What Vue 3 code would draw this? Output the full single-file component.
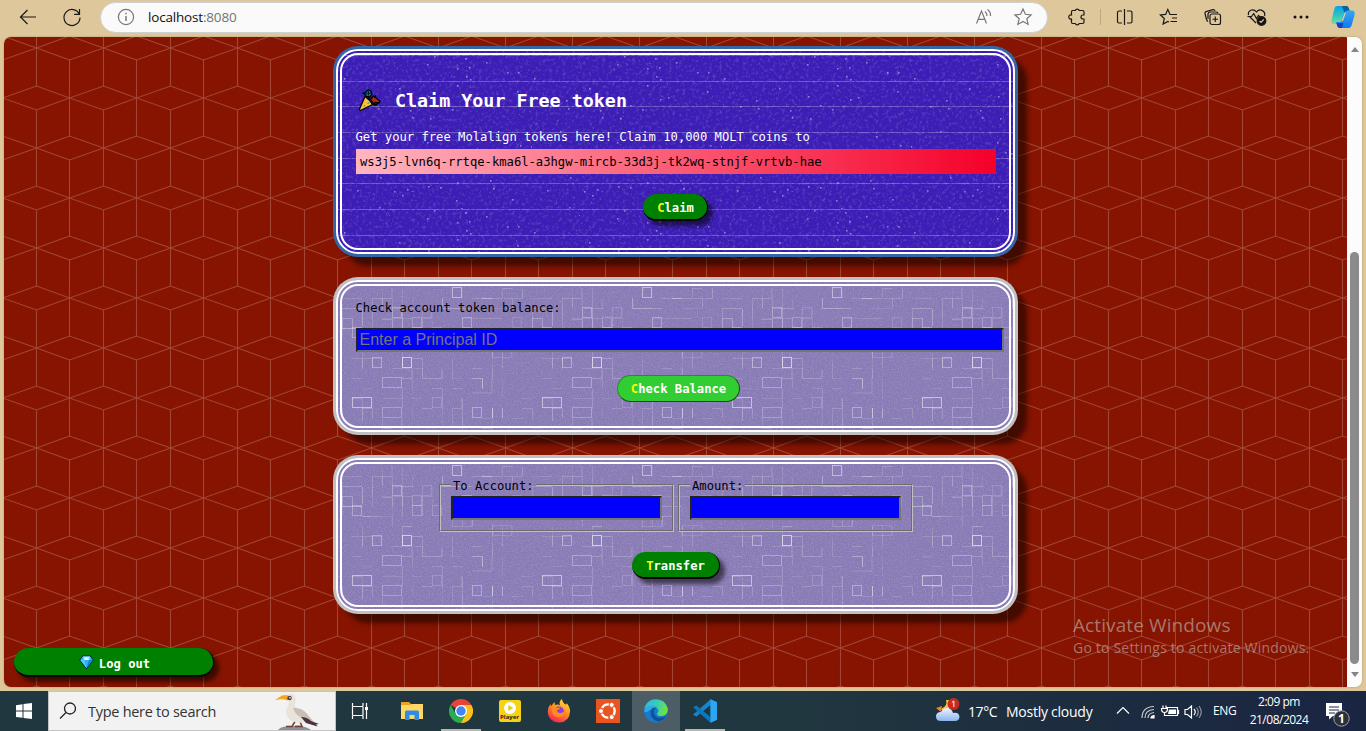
<script setup>
const rand = (seed) => () => {
  seed = (seed * 1664525 + 1013904223) % 4294967296
  return seed / 4294967296
}

const r1 = rand(77)
const specks = Array.from({ length: 560 }, () => {
  const big = r1() > 0.91
  return { x: Math.floor(r1() * 190), y: Math.floor(r1() * 154), s: big ? 1.6 : 1, o: big ? 0.42 : 0.05 + r1() * 0.1 }
})

// Maze cells: column, row, width, height, opacity
const cells = [
  [11, 0, 1, 1, 0.45], [5, 2, 1, 1, 0.3], [12, 3, 1, 1, 0.3], [7, 3, 1, 1, 0.22], [1, 4, 1, 1, 0.3],
  [7, 4, 1, 1, 0.22], [9, 4, 1, 1, 0.18], [3, 7, 1, 1, 0.34], [6, 7, 1, 1, 0.6], [4, 9, 2, 1, 0.3],
  [1, 11, 2, 1, 0.5], [9, 11, 1, 1, 0.17], [4, 12, 2, 1, 0.26], [13, 12, 1, 1, 0.35], [8, 2, 1, 1, 0.15],
  [15, 6, 2, 1, 0.12], [17, 3, 1, 1, 0.12],
]
const strokes = [
  ['M100.5 12V22.500H120', 0.32], ['M72 22.500H52', 0.2], ['M0 32.500H10.500V42', 0.26], ['M20.500 23V40', 0.28],
  ['M0 42.500H20', 0.3], ['M40 33.500H50.500V43', 0.18], ['M70 83V92.500H60', 0.22], ['M80.500 82V92.500H100V84', 0.22],
  ['M130 92.500H140.500V103', 0.32], ['M150.500 122V132', 0.55], ['M160.500 122V132', 0.25],
  ['M30 12.500H50V2', 0.18], ['M120 52.500H140', 0.2], ['M10 72.500H40', 0.14], ['M130 12.500H150', 0.15],
  ['M162 12.500H180', 0.16], ['M60 132.500V146', 0.2], ['M120.500 132V147', 0.22], ['M110 62.500H130V52', 0.15],
  ['M150 92V107H130', 0.15], ['M110 122.500H120V112', 0.17], ['M20.500 122V135', 0.25],
]
const r2 = rand(19)
for (let i = 0; i < 115; i++) {
  const x = Math.floor(r2() * 19) * 10
  const y = Math.floor(r2() * 16) * 10 + 2.5
  const n = r2() > 0.7 ? 20 : 10
  strokes.push([r2() > 0.5 ? `M${x} ${y}h${n}` : `M${x + 0.5} ${y}v${n}`, 0.07 + r2() * 0.14])
}
</script>

<template>
  <div class="desktop">
    <svg class="defs" width="0" height="0">
      <defs>
        <filter id="grain" x="0" y="0" width="100%" height="100%">
          <feTurbulence type="fractalNoise" baseFrequency="0.75" numOctaves="2" seed="4" />
          <feColorMatrix values="0 0 0 0 1  0 0 0 0 1  0 0 0 0 1  1.2 0 0 0 -0.5" />
        </filter>
        <filter id="dust" x="0" y="0" width="100%" height="100%">
          <feTurbulence type="fractalNoise" baseFrequency="0.3" numOctaves="4" seed="9" />
          <feColorMatrix values="0 0 0 0 1  0 0 0 0 1  0 0 0 0 1  1.6 0 0 0 -0.8" />
        </filter>
        <pattern id="stars" width="190" height="154" patternUnits="userSpaceOnUse" x="6" y="6">
          <rect v-for="(p, i) in specks" :key="i" :x="p.x" :y="p.y" :width="p.s" :height="p.s" fill="#fff" :opacity="p.o" />
          <g fill="none" stroke="#fff">
            <path v-for="n in 6" :key="n" :d="`M0 ${Math.round((n - 1) * 25.67) + 0.5}H190`" stroke-opacity=".16" />
            <path v-for="n in 6" :key="'d' + n" :d="`M0 ${Math.round((n - 1) * 25.67) + 0.5}H190`" stroke-opacity=".13" stroke-dasharray="7 3 2 4 12 2" />
          </g>
        </pattern>
        <pattern id="maze" width="190" height="190" patternUnits="userSpaceOnUse" x="6" y="6">
          <g fill="none" stroke="#fff">
            <rect v-for="(c, i) in cells" :key="i" :x="c[0] * 10 + 0.5" :y="c[1] * 10 + 1.5" :width="c[2] * 10 - 1" :height="c[3] * 10" :stroke-opacity="c[4]" />
            <path v-for="(s, i) in strokes" :key="'s' + i" :d="s[0]" :stroke-opacity="s[1]" />
          </g>
        </pattern>
        <linearGradient id="edgeA" x1="0" y1="0" x2="1" y2="1"><stop stop-color="#0c59a4" /><stop offset="1" stop-color="#114a8b" /></linearGradient>
        <linearGradient id="edgeB" x1="0" y1="0" x2="1" y2=".3"><stop stop-color="#2fb5e8" /><stop offset=".6" stop-color="#39cfae" /><stop offset="1" stop-color="#67e34a" /></linearGradient>
        <linearGradient id="fox" x1=".8" y1="0" x2=".3" y2="1"><stop stop-color="#ffe43b" /><stop offset=".45" stop-color="#ff9320" /><stop offset="1" stop-color="#f5205c" /></linearGradient>
        <linearGradient id="cop1" x1="0" y1="0" x2="0" y2="1"><stop stop-color="#0b9fe8" /><stop offset=".5" stop-color="#2cc4c4" /><stop offset="1" stop-color="#7ddc8a" /></linearGradient>
        <linearGradient id="cop2" x1="0" y1="0" x2="0" y2="1"><stop stop-color="#37a7f4" /><stop offset="1" stop-color="#1477f0" /></linearGradient>
        <linearGradient id="cloud" x1="0" y1="0" x2="0" y2="1"><stop stop-color="#eef4ff" /><stop offset="1" stop-color="#8bb4ee" /></linearGradient>
      </defs>
    </svg>

    <header class="toolbar">
      <svg class="ic back" width="24" height="24" viewBox="0 0 24 24"><path d="M20 12H4.500M11.500 5 4.500 12l7 7" /></svg>
      <svg class="ic reload" width="24" height="24" viewBox="0 0 24 24"><path d="M19.200 9A8 8 0 1 0 20 12.500M19.500 4v5.300h-5.300" /></svg>
      <div class="address">
        <svg class="ic grey" width="20" height="20" viewBox="0 0 20 20"><circle cx="10" cy="10" r="7.600" /><path d="M10 9v5M10 5.800v1.500" stroke-width="1.500" /></svg>
        <span class="url">localhost<i>:8080</i></span>
        <svg class="ic grey read" width="20" height="20" viewBox="0 0 20 20"><path d="M2.500 16.500 7.500 4l5 12.500M4.200 12.300h6.600M11 4.500q2 1.500 2 4.500M13.500 2.500q3.300 2.300 3 6.500" /></svg>
        <svg class="ic grey" width="20" height="20" viewBox="0 0 20 20"><path d="m10 2 2.400 5.300 5.700.6-4.300 3.800 1.300 5.700L10 14.500l-5.100 2.900 1.300-5.700L1.900 7.900l5.700-.6Z" /></svg>
      </div>
      <svg class="ic puzzle" width="20" height="20" viewBox="0 0 20 20"><path d="M5.500 3.500h2.700a2.200 2.200 0 0 1 4.100 0H15.500Q17 3.500 17 5v3h-1a2 2 0 0 0 0 4h1v3q0 1.500-1.500 1.500h-3.200a2.200 2.200 0 0 1-4.100 0H5.500Q4.500 16.500 4.500 15v-3a2.100 2.100 0 1 1 0-4V5Q4.500 3.500 5.500 3.500Z" /></svg>
      <span class="sep"></span>
      <svg class="ic split" width="20" height="20" viewBox="0 0 20 20"><path d="M9.500 2v16M7 4H4a1.500 1.500 0 0 0-1.500 1.500v9A1.500 1.500 0 0 0 4 16h3M12 4H15.500a1.500 1.500 0 0 1 1.500 1.500v9A1.500 1.500 0 0 1 15.500 16H12" /></svg>
      <svg class="ic tool" width="20" height="20" viewBox="0 0 20 20"><path d="M12 7.500H18M13 11h5M11.500 14.500H18M12.500 7.500H11L8.800 2.500 6.600 7.400 1.400 8l3.900 3.500-1.200 5.500 4.700-2.600 1.200.7" /></svg>
      <svg class="ic tool" width="20" height="20" viewBox="0 0 20 20"><rect x="7" y="7" width="10.500" height="10.500" rx="2" /><path d="M12.250 9.500v5.500M9.500 12.250H15M5 14.500Q4 14 3.500 12.500L2 6.500Q1.700 5 3 4.600L10 2.700q1.500-.3 2 1.200M5 12V7.500Q5 5 7.500 5H13q1.500 0 2 1" /></svg>
      <svg class="ic tool" width="20" height="20" viewBox="0 0 20 20"><path d="M9 16 2.500 9.500M1.500 8.200C.5 4 6 .5 9.500 5c3.500-4.500 9.500-.5 8 4M0.500 9.500h4l2.200-3 2.800 5 2-3 1.500 1.500" /><circle cx="14.500" cy="14" r="4.300" fill="#111" /><path d="m12.500 14 1.500 1.500 2.700-3" stroke="#dfc79c" /></svg>
      <svg class="ic tool" width="20" height="20" viewBox="0 0 20 20"><g fill="#111" stroke="none"><circle cx="4" cy="10" r="1.500" /><circle cx="10" cy="10" r="1.500" /><circle cx="16" cy="10" r="1.500" /></g></svg>
      <svg class="copilot" width="24" height="24" viewBox="0 0 24 24"><path d="M6 1h9q2 0 2.700 2L19 7h-5L11 16q-1 3-4 3H2.500Q-.5 19 .5 15L3.300 4Q4 1 6 1Z" fill="url(#cop1)" /><path d="M11 1h4.500Q17 1 17.700 3L19 7h-6Z" fill="#09639f" /><path d="M18 23H9q-2 0-2.700-2L5 17h5L13 8q1-2.500 4-2.500h4.500q3 0 2 4.500L20.700 20Q20 23 18 23Z" fill="url(#cop2)" /><path d="M5.500 18h7L11 23H9q-2 0-2.700-2Z" fill="#183fc2" /><path d="M10.500 16 13.500 8h1.500L12 16Z" fill="#dfc79c" /></svg>
    </header>

    <div class="viewport">
      <main class="page">
        <svg class="grid" width="100%" height="100%">
          <defs>
            <pattern id="cubes" width="67" height="100" patternUnits="userSpaceOnUse">
              <path d="M-1.500 61 32.500 49 65.500 61 67.500 60.500M67.500 61.500 65.500 61 32.500 73-1.500 61M32.500 73V100M32.500 0V49M65.500 23V99M-1.500-1 32.500 11-1.500 23M65.500-1 32.500 11 65.500 23M65.500 23 68 22M65.500-1 68 0M62.700 100 65.500 99 68 100M-1.500 99 1.300 100" fill="none" stroke="#fff" stroke-opacity=".21" stroke-width="1.050" />
            </pattern>
          </defs>
          <rect width="100%" height="100%" fill="url(#cubes)" />
        </svg>

        <section class="card faucet">
          <svg class="texture" width="100%" height="100%"><rect width="100%" height="100%" filter="url(#dust)" opacity=".28" /><rect width="100%" height="100%" fill="url(#stars)" /></svg>
          <h2>
            <svg width="24" height="24" viewBox="0 0 24 24" stroke="#000" stroke-width="1.300" stroke-linejoin="round"><path d="M7 8.500Q12 12 14.500 16.500L2.500 22.500Q1.500 22.500 1.500 21Z" fill="#fdc236" /><path d="m6.500 5.500 4-4 1.800 1L14 5.500l-2 3.500-3.500-.5Z" fill="#087f9b" /><path d="m12.500 11.500 3-3.500 2 1.500 4.500 3.500-1 2-4-.5-1 2Z" fill="#a32d18" /><path d="m10 9 2 2M4.500 5l2 .5M18 7.500l-1.500 2M15.500 16.500l3 .5 1-2" fill="none" /><path d="M10.500 3v4.500M8 6l5-1" stroke="#001c20" stroke-width="1" /><path d="M6.500 17v1.500M9.500 15.500l2-1" stroke="#19a9a4" stroke-width="1.300" /></svg>
            <span>Claim Your Free token</span>
          </h2>
          <p class="lead">Get your free Molalign tokens here! Claim 10,000 MOLT coins to</p>
          <p class="principal">ws3j5-lvn6q-rrtqe-kma6l-a3hgw-mircb-33d3j-tk2wq-stnjf-vrtvb-hae</p>
          <button class="pill claim"><b>C</b>laim</button>
        </section>

        <section class="card balance">
          <svg class="texture" width="100%" height="100%"><rect width="100%" height="100%" filter="url(#grain)" opacity=".3" /><rect width="100%" height="100%" fill="url(#maze)" /></svg>
          <p class="label">Check account token balance:</p>
          <input class="field wide" placeholder="Enter a Principal ID">
          <button class="pill check"><b>C</b>heck Balance</button>
        </section>

        <section class="card transfer">
          <svg class="texture" width="100%" height="100%"><rect width="100%" height="100%" filter="url(#grain)" opacity=".3" /><rect width="100%" height="100%" fill="url(#maze)" /></svg>
          <div class="sets">
            <fieldset><legend>To Account:</legend><input class="field"></fieldset>
            <fieldset><legend>Amount:</legend><input class="field"></fieldset>
          </div>
          <button class="pill send"><b>T</b>ransfer</button>
        </section>

        <button class="logout">
          <svg width="15" height="15" viewBox="0 0 15 15"><path d="M3.500 1h8L14.300 5 7.500 13.800.7 5Z" fill="#25b5f5" stroke="#06233c" stroke-width="1" /><path d="M4 1.500h7L10 5H5Z" fill="#a8eaff" /><path d="M1.500 5H5l2.500 8Z" fill="#55cdff" /><path d="M10 5h3.500L7.500 13Z" fill="#1387cf" /><path d="m5 5 2.500-3L10 5Z" fill="#e6faff" /></svg>
          <span>Log out</span>
        </button>
        <div class="watermark"><strong>Activate Windows</strong><span>Go to Settings to activate Windows.</span></div>
      </main>
      <div class="scroll"><i class="up"></i><i class="thumb"></i><i class="down"></i></div>
    </div>

    <footer class="taskbar">
      <div class="start"><svg width="16" height="16" viewBox="0 0 16 16"><path d="M0 2.200 6.500 1.300V7.500H0ZM7.500 1.100 16 0V7.500H7.500ZM0 8.500H6.500V14.800L0 13.900ZM7.500 8.500H16V16L7.500 14.900Z" fill="#fff" /></svg></div>
      <div class="search">
        <svg width="18" height="18" viewBox="0 0 18 18" fill="none" stroke="#222" stroke-width="1.300"><circle cx="11" cy="6.500" r="5.500" /><path d="M7 10.500 1 16.500" /></svg>
        <span>Type here to search</span>
        <svg class="bird" width="46" height="37" viewBox="0 0 46 37"><path d="M3 37q3-4 10-3.500l10-1q9 1 13 4.500Z" fill="#8e9298" /><path d="M11 33.500h6l3-5M20 33.500h7l-2-5" fill="none" stroke="#713d31" stroke-width="1.500" /><path d="M12 1.500Q19-1 20.500 5q.5 4-1 7 1 3 6 4 7 3 9 9l4 5-8-1q-9 2-15-2-7-6-3-13 2-4 1-7l-3-.5Z" fill="#e9e3d9" /><path d="M18 15q9-1 14 6l7 8-9-3q-9-2-12-11Z" fill="#c9beb4" /><path d="M26 24q6 0 10 4l8 3-3 .5 1.500 2L31 30Z" fill="#4b3142" /><path d="M0 7 7 2.500l5.500-.5L13 7.500Q7 5.500 0 7Z" fill="#f5a51b" /><circle cx="14.500" cy="5" r="2.300" fill="#59433a" /><circle cx="15" cy="4.800" r=".8" fill="#fff" /></svg>
      </div>
      <div class="slot view"><svg width="18" height="18" viewBox="0 0 18 18" fill="none" stroke="#fff" stroke-width="1.200"><path d="M1.500 1v3M12 1v3M1.500 4.500H12M1.500 17v-3M12 17v-3M1.500 13.500H12M1.500 4.500v9M12 4.500v9M15.500 1v16" /><path d="M14 5h3v3h-3z" fill="#fff" stroke="none" /></svg></div>
      <div class="slot"><svg width="24" height="24" viewBox="0 0 24 24"><path d="M1 3h8l2 2h11v15H1Z" fill="#eba51c" /><path d="M1 6h9l2-1h11v15H1Z" fill="#ffd766" /><path d="M5 13q0-1.500 1.500-1.500h11Q19 11.500 19 13v8h-4.500v-5h-5v5H5Z" fill="#2f8de0" /></svg></div>
      <div class="slot run"><svg width="24" height="24" viewBox="0 0 24 24"><path d="M12 12 1.600 6A12 12 0 0 1 22.400 6Z" fill="#ea4335" /><path d="M12 12 12 24A12 12 0 0 0 22.400 6H12Z" fill="#fbc116" /><path d="M12 12 6.800 15 1.600 6A12 12 0 0 0 12 24l5.200-9Z" fill="#2da94f" /><circle cx="12" cy="12" r="6" fill="#fff" /><circle cx="12" cy="12" r="4.700" fill="#4285f4" /></svg></div>
      <div class="slot"><div class="player"><svg width="12" height="12" viewBox="0 0 12 12"><circle cx="6" cy="6" r="6" fill="#fff" /><path d="m4.300 3 5 3-5 3Z" fill="#e9c90c" /></svg><span>Player</span></div></div>
      <div class="slot"><svg width="24" height="24" viewBox="0 0 24 24"><path d="M12.500 23.500C5 23.500.8 18.500.8 12.500q0-4 2.700-7.500l.5 2.200L7.500 3l.5 3q3-1 5 .3Q11.500 2.500 15 0q.5 4 4 5.800l.8-1.500q3.500 4 3.200 8.500-.5 10-10.500 10.700Z" fill="url(#fox)" /><circle cx="12" cy="12.500" r="5" fill="#8641dc" /><path d="M5 8q3-1.500 5.500 1l3-.5q-.5 2-3.500 2.500 0 3.500 4 3 3-.5 4-3.500.5 6-4.500 7.500Q6 19 5 12Z" fill="#ff8b20" /></svg></div>
      <div class="slot"><svg width="24" height="24" viewBox="0 0 24 24"><path d="M0 0h24v24H0z" fill="#e95420" /><circle cx="12" cy="12" r="6.700" fill="none" stroke="#fff" stroke-width="2.300" stroke-dasharray="11 3.030" stroke-dashoffset="4" /><g fill="#fff" stroke="#e95420"><circle cx="5" cy="12" r="2.500" /><circle cx="15.700" cy="5.900" r="2.500" /><circle cx="15.700" cy="18.100" r="2.500" /></g></svg></div>
      <div class="slot active"><svg width="24" height="24" viewBox="0 0 24 24"><circle cx="12" cy="12" r="11.800" fill="#1b78d0" /><path d="M.3 13Q0 5 7 3q10-1 12 7 0 4-5 5H13Q16 13 14 10.500 11 8 6 11q-4 3-5.700 2Z" fill="#2dabe2" /><path d="M.5 9Q3 .2 12 .2 21 .5 23.700 9q1 7-6 8-5 0-4.500-2.500 2-2 .8-5Q10 4 .5 9Z" fill="url(#edgeB)" /><path d="M6.500 13q0 8 8 9.500 5-1 7.500-5-9 3.500-11.500-2Q9 11 12.500 8.500 6.500 8 6.500 13Z" fill="url(#edgeA)" /></svg></div>
      <div class="slot run"><svg width="24" height="24" viewBox="0 0 24 24"><path d="M17.500.3 24 3.300v17.400l-6.500 3L17.500 18V6L3.500 17.500 0 15.700Z" fill="#1685d1" /><path d="m0 8.300 3.500-1.800 14 11.500v5.700Z" fill="#0879bd" /><path d="m17.500.3 6.500 3v17.400l-6.500 3Z" fill="#2aa7f2" /></svg></div>
      <div class="weather">
        <svg width="26" height="26" viewBox="0 0 26 26"><path d="M11 2q2 6-5 9 4 5 9 2V2Z" fill="#f7c33c" /><path d="m1 10 6-2-1 6Z" fill="#f08428" /><path d="M6 23q-5 0-5-4.500Q1 14 6 14q2-4.500 7-4 4 1 5 5 6-1 6.500 4Q24 23 20 23Z" fill="url(#cloud)" /><circle cx="18.500" cy="6" r="6" fill="#c92a1f" /><path d="m16.800 4.500 2-1.500v6" stroke="#fff" fill="none" /></svg>
        <span class="temp">17°C</span><span class="sky">Mostly cloudy</span>
      </div>
      <svg class="tray" width="90" height="20" viewBox="0 0 90 20" fill="none" stroke="#fff" stroke-width="1.200">
        <path d="m2 12.500 6-6 6 6" />
        <path d="M27 17Q27 6 39 5.500M30 17q0-8 9-8.500M33 17q0-4.700 6-5.500" stroke-opacity=".75" /><path d="M36 17q0-2 3-2.500V17Z" fill="#fff" />
        <path d="M51.500 6.500H62.500v8H51M63.500 9v4M48 4.500v3M51 4.500v3M46.500 7.500h6q0 4-3 4t-3-4ZM49.500 11.500v3H52" /><path d="M54 8.500h7v4.500h-8z" fill="#fff" stroke="none" />
        <path d="M70 8.500h2.500l4-3.500v12l-4-3.500H70ZM79 8q2.500 3 0 6" /><path d="M81.500 6.500q3.500 4.500 0 9M84 5q4.500 6 0 12" stroke-opacity=".5" />
      </svg>
      <span class="lang">ENG</span>
      <div class="clock"><span>2:09 pm</span><span>21/08/2024</span></div>
      <div class="notes"><svg width="26" height="26" viewBox="0 0 26 26"><path d="M1 1h16v13H8l-4 3.500V14H1Z" fill="#fff" /><path d="M4 5h10M4 8h10M4 11h6" stroke="#1b2944" stroke-width="1" /><circle cx="16.500" cy="16.500" r="7.700" fill="#2d3037" stroke="#a0a4aa" /></svg><b>1</b></div>
    </footer>
  </div>
</template>

<style>
body { overflow: hidden; }
</style>

<style scoped>
* { box-sizing: border-box; }
.desktop { width: 1366px; height: 731px; display: flex; flex-direction: column; overflow: hidden; background: #dfc79c; font-family: "Open Sans", "Noto Sans", sans-serif; }
.defs { position: absolute; }
.toolbar { height: 37px; flex: none; display: flex; align-items: center; padding: 0 0 3px 16px; }
.ic { fill: none; stroke: #191919; stroke-width: 1.200; flex: none; }
.grey { stroke: #777; }
.reload { margin-left: 20px; }
.address { width: 948px; height: 31px; margin: 0 19px 0 16px; border: 1px solid #cfd0d3; border-radius: 16px; background: #fafafa; display: flex; align-items: center; padding: 0 14px 0 15px; flex: none; }
.url { font-size: 13.500px; letter-spacing: -.18px; margin-left: 12px; color: #111; flex: 1; }
.url i { font-style: normal; color: #737373; }
.read { margin-right: 19px; }
.sep { width: 1px; height: 16px; background: #bba785; margin: 0 14px 0 13px; }
.tool { margin-left: 24px; }
.copilot { margin-left: 20px; }

.viewport { height: 650px; flex: none; margin: 0 4px; display: flex; border-radius: 7px; overflow: hidden; box-shadow: 0 0 2px #a58c60; }
.page { width: 1343px; position: relative; overflow: hidden; background: #861400; padding-top: 12px; display: flex; flex-direction: column; align-items: center; font: 12.180px "DejaVu Sans Mono", monospace; color: #000; }
.grid { position: absolute; inset: 0; }
.card { width: 679px; flex: none; position: relative; border-radius: 22px; padding: 0 19.500px; display: flex; flex-direction: column; }
.card > * { position: relative; z-index: 1; }
.card > .texture { position: absolute; inset: 0; z-index: 0; border-radius: 22px; overflow: hidden; }
.card::after { content: ""; position: absolute; inset: 0; border: 6px double #fff; border-radius: 22px; pointer-events: none; z-index: 2; }
.faucet { height: 205px; background: #3c1db5; box-shadow: 0 0 0 3px #3465a4, 10px 10px 5px 2px rgba(0, 0, 0, .5); color: #fff; }
.balance, .transfer { background: #887ab5; box-shadow: 0 0 0 3px #c0c0c0, 10px 10px 5px 2px rgba(0, 0, 0, .5); }
.balance { height: 152px; margin-top: 26px; }
.transfer { height: 153px; margin-top: 26px; }
h2 { margin: 38px 0 0; height: 26px; display: flex; align-items: center; font-size: 18.350px; font-weight: 700; white-space: nowrap; }
h2 svg { margin: 0 13.500px 0 2px; }
p { margin: 0; white-space: pre; }
.lead { margin-top: 14px; height: 22px; line-height: 20px; }
.principal { height: 25px; width: 640px; line-height: 26px; padding-left: 4.500px; background: linear-gradient(to right, #ffb6c1, #f50029); color: #000; }
.pill, .logout { border: 2px outset #008000; border-width: 0 1px 2px 0; border-color: #005a00; background: #008000; color: #fff; font: 700 12.180px "DejaVu Sans Mono", monospace; padding: 0; }
.pill { align-self: center; height: 27px; border-radius: 14px; white-space: pre; padding: 2px 0 0 1px; box-shadow: 5px 5px 4px rgba(0, 0, 0, .55); }
.pill b { color: #ff0; }
.claim { width: 65px; margin-top: 20px; }
.label { height: 20px; line-height: 20px; margin-top: 18px; }
.field { display: block; margin: 0; padding: 0 2px; width: 211px; height: 24px; border: 2px solid; border-color: #222 #767676 #767676 #222; background: #00f; font: 16px "Liberation Sans", Arial, sans-serif; color: #fff; outline: 0; border-radius: 0; }
.field::placeholder { color: #757575; opacity: 1; }
.wide { width: 648px; margin: 10px 0 0 .5px; padding-left: 1.500px; }
.check { width: 123px; margin: 23px 0 0 6px; padding: 1px 0 0; background: #32cd32; border: 1px solid; border-color: #288c28 #145014 #145014 #288c28; box-shadow: none; }
.sets { display: flex; justify-content: center; gap: 4px; margin: 19px 0 0 1px; }
fieldset { margin: 0; width: 235px; min-width: 0; height: 54.500px; border: 2px groove #c0c0c0; padding: 3px 9.500px 8px 10px; }
legend { padding: 0 2px; height: 16px; line-height: 18px; }
.send { width: 88px; margin-top: 20.500px; }
.logout { position: absolute; left: 10px; top: 611px; width: 200px; height: 29px; border-radius: 15px; display: flex; align-items: center; justify-content: center; gap: 5px; white-space: pre; box-shadow: 5px 5px 4px rgba(0, 0, 0, .55); padding: 4px 0 0 2px; }
.logout svg { margin-top: -3px; }
.watermark { position: absolute; left: 1069px; top: 574px; font-family: "Open Sans", sans-serif; color: rgba(190, 177, 172, .64); white-space: nowrap; display: flex; flex-direction: column; }
.watermark strong { font-weight: 400; font-size: 19px; line-height: 28px; letter-spacing: .1px; }
.watermark span { font-size: 14px; line-height: 18px; letter-spacing: .2px; }
.scroll { width: 15px; background: #fcfcfc; display: flex; flex-direction: column; align-items: center; padding: 10px 0 10px; }
.up, .down { border: 4.500px solid transparent; border-top: 0; border-bottom: 5px solid #858585; }
.thumb { width: 9px; height: 412px; margin: 200px 0 auto; background: #8b8b8b; border-radius: 5px; }
.down { border-bottom: 0; border-top: 5px solid #858585; }

.taskbar { height: 40px; margin-top: 4px; flex: none; display: flex; color: #fff; background: linear-gradient(90deg, #21373f 0, #21373f 58%, #1d2d3f 78%, #1a2542 100%); white-space: nowrap; }
.start { width: 48px; display: flex; align-items: center; justify-content: center; }
.search { width: 288px; background: #f2f2f2; border: 1px solid #c4c4c4; display: flex; align-items: center; padding-left: 10px; color: #333; font-size: 14.500px; }
.search span { width: 187px; margin-left: 11px; letter-spacing: -.28px; }
.bird { align-self: flex-end; }
.slot { width: 49px; display: flex; align-items: center; justify-content: center; position: relative; }
.view { width: 51px; padding-right: 3px; }
.active { background: #4c5d66; width: 48px; }
.run::after { content: ""; position: absolute; left: 4.500px; bottom: 0; width: 40px; height: 2px; background: #bab5b1; }
.player { width: 22px; height: 22px; background: #f7d116; border-radius: 2px; display: flex; flex-direction: column; align-items: center; padding-top: 2px; }
.player span { color: #222; font-size: 6px; line-height: 7px; font-weight: 700; }
.weather { margin-left: 206px; width: 179px; display: flex; align-items: center; font-size: 14px; }
.temp { width: 38px; margin-left: 7px; letter-spacing: -.4px; }
.sky { letter-spacing: -.25px; }
.tray { margin: 10px 0 0 1px; flex: none; }
.lang { font-size: 12px; line-height: 40px; width: 29px; margin-left: 8px; letter-spacing: -.3px; }
.clock { width: 74px; display: flex; flex-direction: column; align-items: center; font-size: 12px; line-height: 18px; padding-top: 2px; letter-spacing: -.5px; }
.notes { position: relative; margin: 11px 0 0 9px; }
.notes b { position: absolute; left: 13px; top: 9px; font-size: 12px; line-height: 16px; }
</style>
